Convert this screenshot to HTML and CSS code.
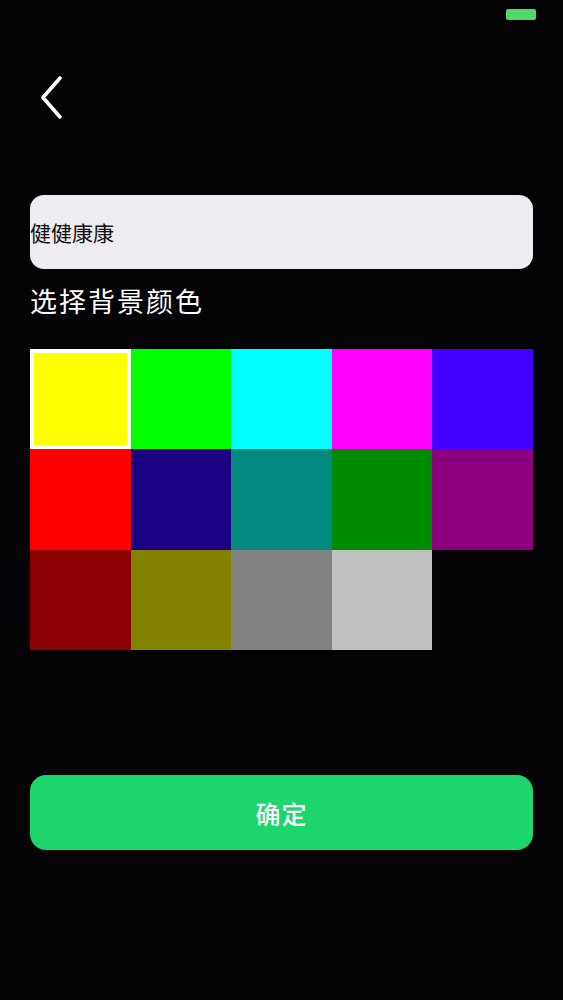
FILE: index.html
```html
<!DOCTYPE html>
<html lang="zh">
<head>
<meta charset="utf-8">
<title>选择背景颜色</title>
<link rel="stylesheet" href="styles.css">
</head>
<body>
<div class="page">
  <div class="status-bar">
    <span class="battery"></span>
  </div>
  <div class="nav">
    <svg class="back" width="24" height="46" viewBox="0 0 24 46">
      <path d="M20 3 L3 22.5 L20 42" fill="none" stroke="#fff" stroke-width="3.6" stroke-linecap="round" stroke-linejoin="round"/>
    </svg>
  </div>
  <div class="content">
    <div class="input">健健康康</div>
    <div class="label">选择背景颜色</div>
    <div class="palette">
      <div class="swatch selected c-yellow"></div>
      <div class="swatch c-lime"></div>
      <div class="swatch c-cyan"></div>
      <div class="swatch c-magenta"></div>
      <div class="swatch c-blue"></div>
      <div class="swatch c-red"></div>
      <div class="swatch c-navy"></div>
      <div class="swatch c-teal"></div>
      <div class="swatch c-green"></div>
      <div class="swatch c-purple"></div>
      <div class="swatch c-maroon"></div>
      <div class="swatch c-olive"></div>
      <div class="swatch c-gray"></div>
      <div class="swatch c-silver"></div>
    </div>
    <button class="confirm">确定</button>
  </div>
</div>
</body>
</html>
```

FILE: styles.css
```css
html, body {
  margin: 0;
  padding: 0;
  background: #040305;
}
body {
  font-family: "Noto Sans CJK SC", "Noto Sans", sans-serif;
  width: 563px;
  height: 1000px;
  overflow: hidden;
}
.page {
  display: flex;
  flex-direction: column;
}
.status-bar {
  height: 30px;
  display: flex;
  justify-content: flex-end;
  align-items: flex-start;
  padding-right: 27px;
}
.battery {
  display: block;
  width: 30px;
  height: 11px;
  margin-top: 9px;
  background: #50d96a;
  border-radius: 2px;
}
.nav {
  height: 165px;
  padding-left: 40px;
  box-sizing: border-box;
  padding-top: 45px;
}
.back {
  display: block;
}
.content {
  padding: 0 30px;
  display: flex;
  flex-direction: column;
}
.input {
  height: 74px;
  border-radius: 14px;
  background: #efedf2;
  color: #111;
  font-size: 21px;
  line-height: 74px;
  padding-left: 0;
  box-sizing: border-box;
}
.label {
  margin-top: 18px;
  color: #fff;
  font-size: 27px;
  line-height: 28px;
  letter-spacing: 2px;
}
.palette {
  margin-top: 34px;
  display: grid;
  grid-template-columns: repeat(5, 1fr);
  grid-auto-rows: 100.4px;
}
.swatch.selected {
  box-shadow: inset 0 0 0 4px #fff;
}
.c-yellow { background: #ffff00; }
.c-lime { background: #00ff00; }
.c-cyan { background: #00ffff; }
.c-magenta { background: #ff00ff; }
.c-blue { background: #4200ff; }
.c-red { background: #ff0000; }
.c-navy { background: #1b0082; }
.c-teal { background: #008a80; }
.c-green { background: #008b00; }
.c-purple { background: #8c0080; }
.c-maroon { background: #8b0000; }
.c-olive { background: #838300; }
.c-gray { background: #828282; }
.c-silver { background: #c1c0c1; }
.confirm {
  margin-top: 125px;
  height: 75px;
  border: none;
  border-radius: 16px;
  background: #1cd66c;
  color: #fff;
  font-family: "Noto Sans CJK SC", "Noto Sans", sans-serif;
  font-size: 25px;
  font-weight: 500;
  letter-spacing: 1px;
  padding: 0;
}
```
